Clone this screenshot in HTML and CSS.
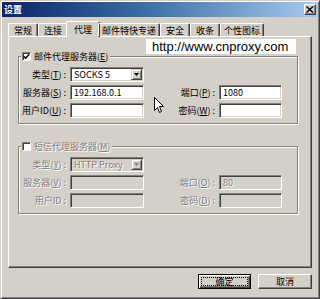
FILE: index.html
```html
<!DOCTYPE html>
<html lang="zh-CN">
<head>
    <meta charset="UTF-8">
    <meta name="viewport" content="width=device-width, initial-scale=1.0">
    <title>设置</title>
    <link rel="stylesheet" href="styles.css">
</head>
<body>
    <div class="window">
        <div class="titlebar">
            <span class="title">设置</span>
            <span class="close-btn">
                <svg width="8" height="7" viewBox="0 0 8 7"><path d="M0.5 0.5 L7 6.5 M7 0.5 L0.5 6.5" stroke="#000" stroke-width="1.4"/></svg>
            </span>
        </div>

        <div class="tabs">
            <div class="tab">常规</div>
            <div class="tab">连接</div>
            <div class="tab active">代理</div>
            <div class="tab">邮件特快专递</div>
            <div class="tab">安全</div>
            <div class="tab">收条</div>
            <div class="tab">个性图标</div>
        </div>

        <div class="panel">
            <div class="url-row">
                <span class="url">http://www.cnproxy.com</span>
            </div>

            <div class="group">
                <div class="group-head">
                    <span class="checkbox">
                        <svg width="7" height="7" viewBox="0 0 7 7"><path d="M0.8 3.2 L2.7 5.2 L6.3 1.2" fill="none" stroke="#000" stroke-width="1.5"/></svg>
                    </span>
                    <span>邮件代理服务器(<u>E</u>)</span>
                </div>
                <div class="fields">
                    <label>类型(<u>T</u>) :</label>
                    <div class="select">
                        <span class="value">SOCKS 5</span>
                        <span class="drop"><svg width="5" height="3" viewBox="0 0 5 3"><path d="M0 0 H5 L2.5 3 Z" fill="#000"/></svg></span>
                    </div>
                    <label class="row-start">服务器(<u>S</u>) :</label>
                    <div class="input">192.168.0.1</div>
                    <label>端口(<u>P</u>) :</label>
                    <div class="input">1080</div>
                    <label>用户ID(<u>U</u>) :</label>
                    <div class="input"></div>
                    <label>密码(<u>W</u>) :</label>
                    <div class="input"></div>
                </div>
            </div>

            <div class="group group-gap disabled">
                <div class="group-head">
                    <span class="checkbox"></span>
                    <span>短信代理服务器(<u>M</u>)</span>
                </div>
                <div class="fields">
                    <label>类型(<u>Y</u>) :</label>
                    <div class="select">
                        <span class="value">HTTP Proxy</span>
                        <span class="drop"><svg width="5" height="3" viewBox="0 0 5 3"><path d="M0 0 H5 L2.5 3 Z" fill="#808080"/></svg></span>
                    </div>
                    <label class="row-start">服务器(<u>V</u>) :</label>
                    <div class="input"></div>
                    <label>端口(<u>O</u>) :</label>
                    <div class="input">80</div>
                    <label>用户ID :</label>
                    <div class="input"></div>
                    <label>密码(<u>D</u>) :</label>
                    <div class="input"></div>
                </div>
            </div>
        </div>

        <div class="buttons">
            <div class="btn default"><span class="focus">确定</span></div>
            <div class="btn">取消</div>
        </div>
    </div>

    <!-- mouse pointer captured in the screenshot -->
    <svg class="cursor" width="11" height="17" viewBox="0 0 11 17">
        <path d="M0.5 0.5 L0.5 13.5 L3.5 10.5 L5.5 15.5 L7.5 14.5 L5.5 9.5 L9.5 9.5 Z" fill="#fff" stroke="#000" stroke-width="1"/>
    </svg>
</body>
</html>
```

FILE: styles.css
```css
* {
    box-sizing: border-box;
}

body {
    margin: 0;
    background-color: #d4d0c8;
    font-family: "Noto Sans CJK SC", "Liberation Sans", sans-serif;
    font-size: 9px;
    line-height: 11px;
    color: #000;
}

.window {
    width: 320px;
    height: 299px;
    display: flex;
    flex-direction: column;
    padding: 1px;
    border: 1px solid;
    border-color: #d4d0c8 #404040 #404040 #d4d0c8;
    box-shadow: inset 1px 1px #fff, inset -1px -1px #808080;
    background-color: #d4d0c8;
}

/* title bar */
.titlebar {
    height: 15px;
    display: flex;
    align-items: center;
    justify-content: space-between;
    padding: 0 2px 0 2px;
    background: linear-gradient(90deg, #0a246a, #3a6ea5 45%, #a6caf0);
}

.title {
    color: #fff;
    font-weight: bold;
}

.close-btn {
    width: 12px;
    height: 11px;
    display: flex;
    align-items: center;
    justify-content: center;
    border: 1px solid;
    border-color: #fff #404040 #404040 #fff;
    box-shadow: inset -1px -1px #808080;
    background-color: #d4d0c8;
}

/* tabs */
.tabs {
    display: flex;
    align-items: flex-end;
    height: 15px;
    margin: 4px 0 0 6px;
    position: relative;
    z-index: 1;
}

.tab {
    min-width: 30px;
    height: 13px;
    padding: 1px 3px 0;
    text-align: center;
    border: 1px solid;
    border-bottom: none;
    border-color: #fff #404040 transparent #fff;
    border-radius: 2px 2px 0 0;
    box-shadow: inset -1px 0 #808080;
}

.tab.active {
    min-width: 34px;
    height: 16px;
    margin: 0 -2px -1px;
    padding: 2px 5px 0;
    background-color: #d4d0c8;
}

/* tab page */
.panel {
    flex: 1;
    margin: 0 6px;
    padding-top: 1px;
    border: 1px solid;
    border-color: #fff #404040 #404040 #fff;
    box-shadow: inset -1px -1px #808080;
}

.url-row {
    display: flex;
    justify-content: flex-end;
    margin: 1px 15px 0 0;
}

.url {
    width: 150px;
    height: 15px;
    padding-left: 6px;
    background-color: #fff;
    font-family: "Liberation Sans", sans-serif;
    font-size: 13px;
    line-height: 15px;
}

/* group boxes */
.group {
    margin: 2px 13px 0 9px;
    padding-bottom: 5px;
    border: 1px solid #808080;
    box-shadow: inset 1px 1px #fff, 1px 1px #fff;
}

.group-gap {
    margin-top: 22px;
}

.group-head {
    display: flex;
    align-items: center;
    gap: 3px;
    width: max-content;
    height: 11px;
    margin: -6px 0 0 2px;
    padding: 0 2px 0 1px;
    background-color: #d4d0c8;
}

.checkbox {
    width: 9px;
    height: 9px;
    display: flex;
    align-items: center;
    justify-content: center;
    border: 1px solid;
    border-color: #808080 #fff #fff #808080;
    box-shadow: inset 1px 1px #404040;
    background-color: #fff;
}

.fields {
    display: grid;
    grid-template-columns: 47px 74px 67px 63px;
    grid-auto-rows: 15px;
    column-gap: 4px;
    row-gap: 3px;
    margin-top: 5px;
}

.fields label {
    align-self: center;
    text-align: right;
    white-space: nowrap;
}

.row-start {
    grid-column-start: 1;
}

.input,
.select {
    height: 15px;
    padding: 1px 3px;
    border: 1px solid;
    border-color: #808080 #fff #fff #808080;
    box-shadow: inset 1px 1px #404040, inset -1px -1px #d4d0c8;
    background-color: #fff;
    white-space: nowrap;
}

.select {
    display: flex;
    justify-content: space-between;
    padding: 1px 1px 1px 3px;
}

.drop {
    width: 11px;
    height: 11px;
    display: flex;
    align-items: center;
    justify-content: center;
    border: 1px solid;
    border-color: #d4d0c8 #404040 #404040 #d4d0c8;
    box-shadow: inset 1px 1px #fff, inset -1px -1px #808080;
    background-color: #d4d0c8;
}

.disabled .group-head,
.disabled label,
.disabled .input,
.disabled .value {
    color: #808080;
    text-shadow: 1px 1px #fff;
}

.disabled .input,
.disabled .select {
    background-color: #d4d0c8;
}

/* dialog buttons */
.buttons {
    display: flex;
    justify-content: flex-end;
    gap: 7px;
    margin: 6px 6px 8px 0;
}

.btn {
    width: 54px;
    height: 15px;
    display: flex;
    align-items: center;
    justify-content: center;
    border: 1px solid;
    border-color: #fff #404040 #404040 #fff;
    box-shadow: inset -1px -1px #808080;
}

.btn.default {
    width: 53px;
    padding: 2px;
    border-color: #000;
    box-shadow: inset 1px 1px #fff, inset -1px -1px #404040, inset -2px -2px #808080;
}

.focus {
    flex: 1;
    height: 100%;
    display: flex;
    align-items: center;
    justify-content: center;
    border: 1px dotted #000;
}

.cursor {
    position: absolute;
    left: 154px;
    top: 97px;
}
```
